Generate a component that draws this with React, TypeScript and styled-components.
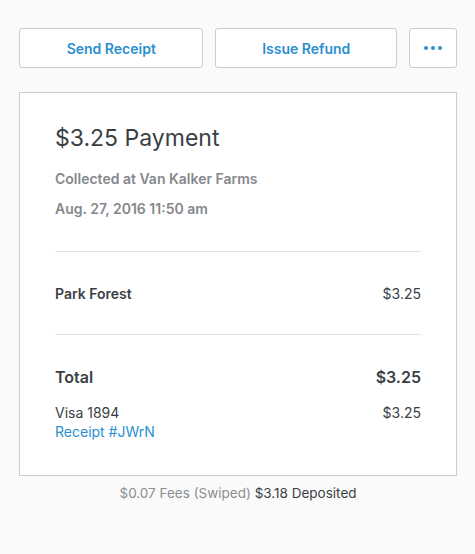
import React from 'react'
import styled, { createGlobalStyle } from 'styled-components'

const GlobalStyle = createGlobalStyle`
    html, body {
        margin: 0;
        padding: 0;
        background: #fafafa;
        font-family: Inter, "Liberation Sans", sans-serif;
        -webkit-font-smoothing: antialiased;
    }
`

const Page = styled.div`
    padding: 28px 18px 0 19px;
    display: flex;
    flex-direction: column;
`

const Toolbar = styled.div`
    display: flex;
    gap: 12px;
    margin-bottom: 24px;
`

const ActionButton = styled.button<{ grow?: number }>`
    flex: ${({ grow }) => (grow ? `${grow} 1 0` : '0 0 48px')};
    height: 40px;
    background: #fff;
    border: 1px solid #c9cbcd;
    border-radius: 3px;
    color: #2b8fd0;
    font-family: inherit;
    font-size: 14px;
    font-weight: 600;
    cursor: pointer;
    display: flex;
    align-items: center;
    justify-content: center;
    padding: 0;
`

const Dots = styled.span`
    display: flex;
    gap: 3px;
    span {
        width: 4px;
        height: 4px;
        border-radius: 50%;
        background: #2b8fd0;
    }
`

const Card = styled.div`
    background: #fff;
    border: 1px solid #c9cbcd;
    padding: 30px 35px 34px 35px;
`

const Title = styled.h1`
    margin: 0 0 17px;
    font-size: 23px;
    font-weight: 400;
    line-height: 30px;
    color: #3a3f45;
`

const Meta = styled.div`
    font-size: 14px;
    font-weight: 600;
    color: #85888c;
    line-height: 18px;
    margin-bottom: 12px;
`

const Divider = styled.hr`
    border: none;
    border-top: 1px solid #e2e3e4;
    margin: 0;
`

const Section = styled.div<{ pad: string }>`
    padding: ${({ pad }) => pad};
`

const Row = styled.div<{ gapTop?: number }>`
    display: flex;
    justify-content: space-between;
    align-items: baseline;
    margin-top: ${({ gapTop }) => gapTop ?? 0}px;
`

const Label = styled.span<{ big?: boolean; bold?: boolean }>`
    font-size: ${({ big }) => (big ? '16px' : '14px')};
    font-weight: ${({ bold }) => (bold ? 600 : 400)};
    color: #3a3f45;
    line-height: 20px;
`

const Link = styled.a`
    display: block;
    font-size: 14px;
    color: #2b8fd0;
    line-height: 18px;
    text-decoration: none;
`

const Footer = styled.div`
    text-align: center;
    font-size: 13.5px;
    color: #8b8e92;
    padding-top: 9px;
    b {
        font-weight: 400;
        color: #3a3f45;
    }
`

export default function App() {
    return (
        <>
            <GlobalStyle />
            <Page>
                <Toolbar>
                    <ActionButton grow={185}>Send Receipt</ActionButton>
                    <ActionButton grow={182}>Issue Refund</ActionButton>
                    <ActionButton>
                        <Dots><span /><span /><span /></Dots>
                    </ActionButton>
                </Toolbar>
                <Card>
                    <Title>$3.25 Payment</Title>
                    <Meta>Collected at Van Kalker Farms</Meta>
                    <Meta>Aug. 27, 2016 11:50 am</Meta>
                    <Section pad="21px 0 0" />
                    <Divider />
                    <Section pad="32px 0 30px">
                        <Row>
                            <Label bold>Park Forest</Label>
                            <Label>$3.25</Label>
                        </Row>
                    </Section>
                    <Divider />
                    <Section pad="32px 0 0">
                        <Row>
                            <Label big bold>Total</Label>
                            <Label big bold>$3.25</Label>
                        </Row>
                        <Row gapTop={16}>
                            <Label>Visa 1894</Label>
                            <Label>$3.25</Label>
                        </Row>
                        <Link href="#">Receipt #JWrN</Link>
                    </Section>
                </Card>
                <Footer>
                    $0.07 Fees (Swiped) <b>$3.18 Deposited</b>
                </Footer>
            </Page>
        </>
    )
}
